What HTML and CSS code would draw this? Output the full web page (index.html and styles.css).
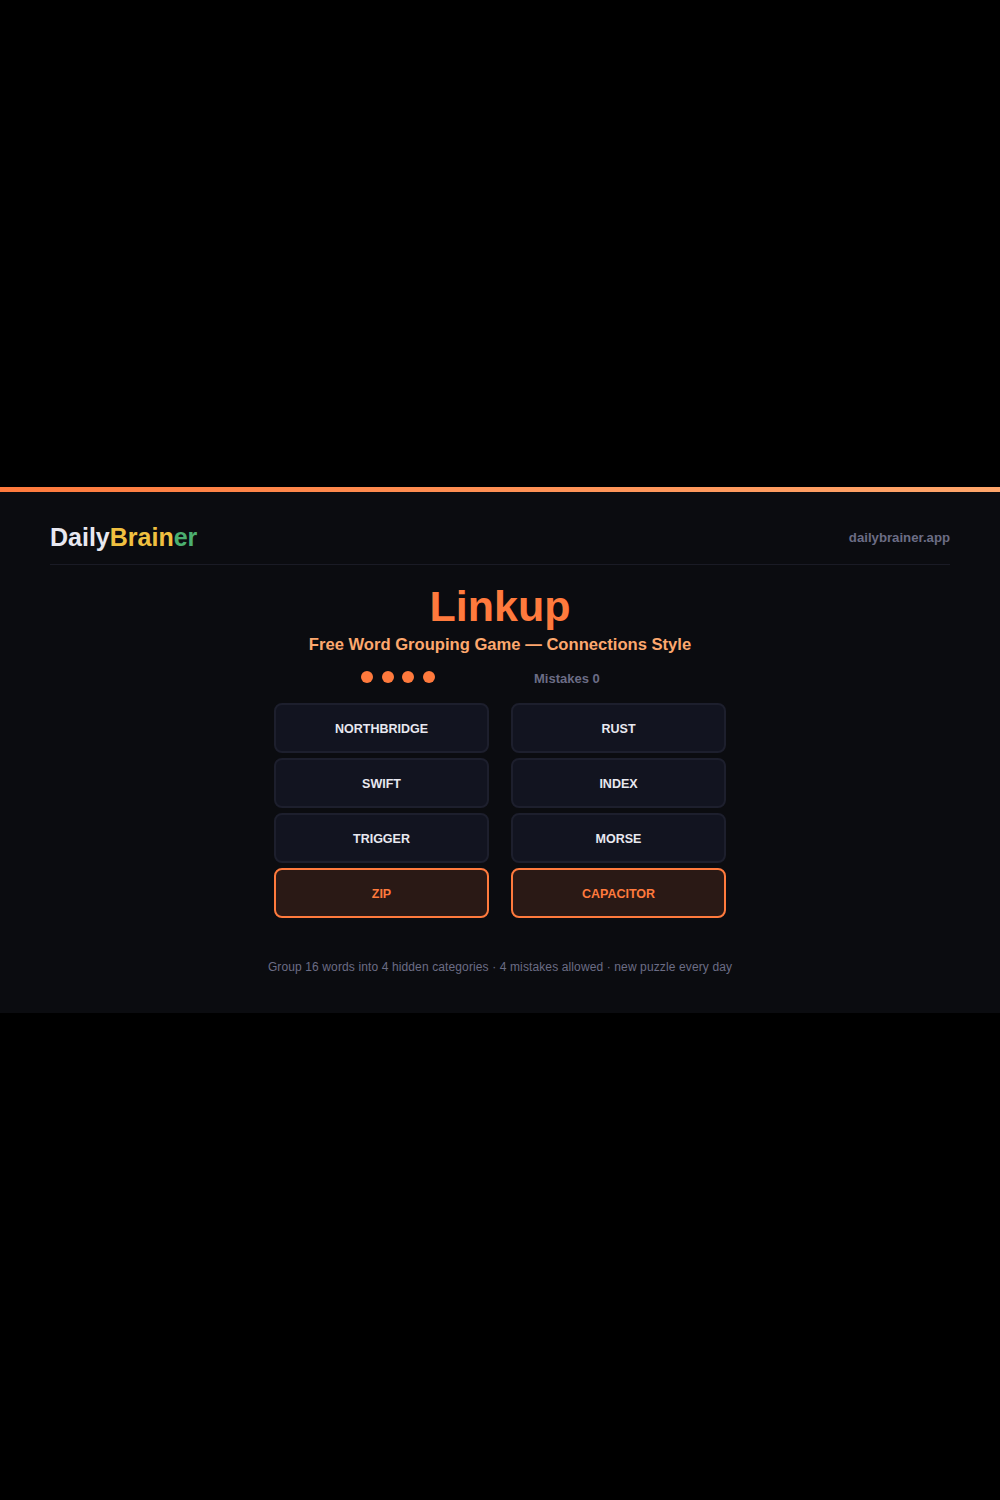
FILE: index.html
```html
<!DOCTYPE html>
<html lang="en">
<head>
  <meta charset="UTF-8">
  <title>Linkup - DailyBrainer</title>
  <link rel="stylesheet" href="styles.css">
</head>
<body>
  <div class="card">
    <div class="topbar"></div>
    <div class="inner">
      <header class="header">
        <div class="logo">Daily<span class="brain">Brain</span><span class="er">er</span></div>
        <div class="site">dailybrainer.app</div>
      </header>

      <h1 class="title">Linkup</h1>
      <p class="subtitle">Free Word Grouping Game — Connections Style</p>

      <div class="status">
        <div class="lives">
          <span class="dot"></span><span class="dot"></span><span class="dot"></span><span class="dot"></span>
        </div>
        <div class="mistakes">Mistakes 0</div>
      </div>

      <div class="grid" id="grid"></div>

      <p class="note">Group 16 words into 4 hidden categories · 4 mistakes allowed · new puzzle every day</p>
    </div>
  </div>

  <script>
    const words = ["NORTHBRIDGE", "RUST", "SWIFT", "INDEX", "TRIGGER", "MORSE", "ZIP", "CAPACITOR"];
    const selected = ["ZIP", "CAPACITOR"];

    const grid = document.getElementById("grid");
    for (const word of words) {
      const tile = document.createElement("button");
      tile.className = "tile" + (selected.includes(word) ? " selected" : "");
      tile.textContent = word;
      tile.addEventListener("click", () => tile.classList.toggle("selected"));
      grid.appendChild(tile);
    }
  </script>
</body>
</html>
```

FILE: styles.css
```css
html, body { margin: 0; background: #000; }
body { min-height: 100vh; display: flex; flex-direction: column; justify-content: center; font-family: "Liberation Sans", Arial, sans-serif; }

.card { background: #0b0c10; }
.topbar { height: 5px; background: linear-gradient(90deg, #ff7a3d, #ffa66b); }
.inner { padding: 0 50px 38px; }

.header { display: flex; justify-content: space-between; align-items: center; padding: 30px 0 12px; border-bottom: 1px solid #1a1b25; }
.logo { font-size: 25px; font-weight: bold; line-height: 30px; color: #e8e8f0; }
.logo .brain { color: #f0c040; }
.logo .er { color: #4caf70; }
.site { font-size: 13.2px; font-weight: bold; line-height: 18px; padding-top: 2px; color: #6b6d85; }

.title { margin: 16px 0 0; font-size: 43px; line-height: 50px; text-align: center; color: #ff7a3d; }
.subtitle { margin: 3px 0 0; font-size: 16.6px; line-height: 22px; font-weight: bold; text-align: center; color: #fda86e; }

.status { display: flex; justify-content: center; align-items: center; gap: 99px; height: 20px; margin-top: 11px; }
.lives { display: flex; gap: 8.7px; }
.dot { width: 12px; height: 12px; border-radius: 50%; background: #ff7a3d; }
.mistakes { width: 105px; font-size: 13px; font-weight: bold; padding-top: 2px; color: #6b6d85; }

.grid { width: 452px; margin: 16px auto 0; display: grid; grid-template-columns: 1fr 1fr; column-gap: 22px; row-gap: 5px; }
.tile { height: 50px; padding: 2px 0 0; border: 2px solid #1d1f2d; border-radius: 8px; background: #121420; color: #e8e8f0; font-family: inherit; font-size: 12.5px; font-weight: bold; cursor: pointer; }
.tile.selected { background: #2a1915; border-color: #ff7a3d; color: #ff7a3d; }

.note { margin: 41px 0 0; font-size: 12px; line-height: 16px; letter-spacing: 0.12px; text-align: center; color: #6b6d85; }
```
